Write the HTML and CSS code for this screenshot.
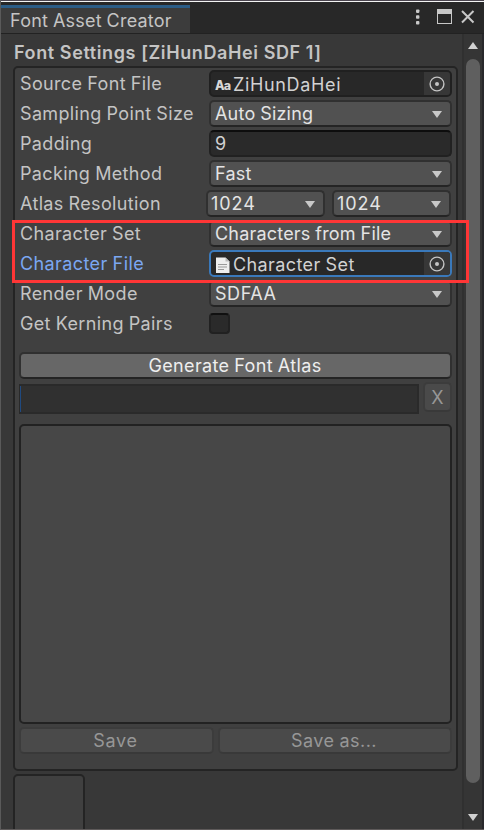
FILE: index.html
```html
<!DOCTYPE html>
<html lang="en">
<head>
<meta charset="utf-8">
<title>Font Asset Creator</title>
<link rel="stylesheet" href="styles.css">
</head>
<body>
<div class="window">
  <header class="titlebar">
    <div class="tab">Font Asset Creator</div>
    <svg class="controls" width="70" height="31" viewBox="0 0 70 31">
      <g fill="#c8c8c8"><rect x="4" y="6.5" width="3.4" height="3.4" rx=".8"/><rect x="4" y="12.3" width="3.4" height="3.4" rx=".8"/><rect x="4" y="18.1" width="3.4" height="3.4" rx=".8"/>
      <path d="M25 6h15v15H25zM26 11v9h13v-9z" fill-rule="evenodd"/></g>
      <path d="M50 8l11.500 11.500M61.500 8L50 19.500" stroke="#c8c8c8" stroke-width="2"/>
    </svg>
  </header>
  <div class="body">
    <main class="content">
      <h1>Font Settings [ZiHunDaHei SDF 1]</h1>
      <section class="panel">
        <div class="row"><label>Source Font File</label>
          <div class="field object"><svg class="aa" width="17" height="16" viewBox="0 0 17 16"><text x="0" y="13" textLength="16">Aa</text></svg><span class="font-name">ZiHunDaHei</span>
            <i class="picker"><svg width="16" height="16" viewBox="0 0 16 16"><circle cx="8" cy="8" r="6.9" fill="none" stroke="#c4c4c4" stroke-width="1.4"/><circle cx="8" cy="8" r="2" fill="#c4c4c4"/></svg></i></div></div>
        <div class="row"><label>Sampling Point Size</label><div class="field drop">Auto Sizing</div></div>
        <div class="row"><label>Padding</label><div class="field input">9</div></div>
        <div class="row"><label>Packing Method</label><div class="field drop">Fast</div></div>
        <div class="row pair"><label>Atlas Resolution</label><div class="field drop">1024</div><div class="field drop">1024</div></div>
        <div class="row"><label>Character Set</label><div class="field drop">Characters from File</div></div>
        <div class="row active"><label>Character File</label>
          <div class="field object"><svg class="doc" width="15" height="17" viewBox="0 0 15 17"><path d="M1 .5h9.500l4 4v11.500H1z" fill="#eee"/><path d="M10.500 .5v4h4" fill="#bbb"/><path d="M3 7.500h9M3 10h9M3 12.500h6" stroke="#999"/></svg><span>Character Set</span>
            <i class="picker"><svg width="16" height="16" viewBox="0 0 16 16"><circle cx="8" cy="8" r="6.9" fill="none" stroke="#c4c4c4" stroke-width="1.4"/><circle cx="8" cy="8" r="2" fill="#c4c4c4"/></svg></i></div></div>
        <div class="row"><label>Render Mode</label><div class="field drop mode">SDFAA</div></div>
        <div class="row"><label>Get Kerning Pairs</label><div class="check"></div></div>
        <button class="generate">Generate Font Atlas</button>
        <div class="progress-row"><div class="progress"></div><button class="muted cancel">X</button></div>
        <div class="preview"></div>
        <div class="save-row"><button class="muted save">Save</button><button class="muted saveas">Save as...</button></div>
      </section>
      <div class="thumb-box"></div>
    </main>
    <aside class="scrollbar"><i class="up"></i><div class="thumb"></div><i class="down"></i></aside>
  </div>
  <div class="highlight"></div>
</div>
</body>
</html>
```
FILE: styles.css
```css
* { box-sizing: border-box; }
body { margin: 0; background: #383838; }
.window {
  position: relative; width: 484px; height: 830px; overflow: hidden;
  display: flex; flex-direction: column;
  border-left: 1px solid #5a5a5a; border-bottom: 1px solid #5e5a5a;
  background: #383838; color: #c4c4c4;
  font: 18px/27px Inter, "Liberation Sans", sans-serif; letter-spacing: .35px; word-spacing: -.5px;
  white-space: nowrap;
}
.titlebar {
  height: 34px; flex: none; display: flex; align-items: flex-start; justify-content: space-between;
  background: #282828; border-top: 1px solid #4c4650; border-bottom: 1px solid #222;
  box-shadow: inset 0 1px #f4f4f4;
}
.tab {
  width: 189px; height: 28px; margin-top: 4px; padding-left: 9px;
  background: #3c3c3c; border-top: 3px solid #2c5d87; line-height: 26px; letter-spacing: .22px;
}
.controls { margin: 2px 2px 0 0; width: 70px; flex: none; }
.body { flex: 1; min-height: 0; display: flex; }
.content { width: 461px; padding: 5px 4px 0 12px; overflow: hidden; }
h1 { margin: 0 0 0 1px; height: 27px; font-size: 18px; line-height: 27px; font-weight: 600; letter-spacing: .6px; word-spacing: 0; }
.panel {
  width: 445px; height: 705px; padding: 2px 4px 0 4px;
  border: 2px solid #242424; border-radius: 5px; background: #404040;
}
.row { display: flex; height: 30px; }
.row label { width: 190px; padding-left: 1px; flex: none; line-height: 28px; }
.field {
  width: 243px; height: 27px; padding-left: 4px; position: relative; flex: none;
  border: 2px solid #303030; border-radius: 5px; line-height: 24px; color: #e4e4e4;
}
.drop { background: #515151; border-bottom-color: #242424; letter-spacing: .2px; }
.drop.mode { letter-spacing: .55px; }
.drop::after {
  content: ""; position: absolute; right: 8px; top: 9px;
  border: 5.5px solid transparent; border-top: 7px solid #c8c8c8; border-bottom: 0;
}
.object { display: flex; background: #282828; border-color: #202020; color: #d2d2d2; line-height: 25px; }
.font-name { letter-spacing: .65px; }
.input { background: #2a2a2a; border-color: #212121; border-top-color: #0d0d0d; color: #d2d2d2; }
.pair label { width: 187px; }
.pair .field { width: 119px; padding-left: 3px; letter-spacing: .95px; }
.pair .field + .field { margin-left: 7px; }
.aa { margin: 5px 1px 0 0; flex: none; overflow: visible; }
.aa text { font: 800 12.5px Inter, sans-serif; fill: #d8d8d8; letter-spacing: 0; }
.doc { margin: 5px 3px 0 0; flex: none; }
.picker {
  margin-left: auto; width: 26px; height: 23px; background: #373737; border-radius: 0 3px 3px 0;
  display: flex; align-items: center; justify-content: center;
}
.active label { color: #7ba7f2; letter-spacing: .4px; }
.active .object { border-color: #3a79bb; letter-spacing: .4px; }
.check {
  width: 21px; height: 21px; margin-top: 3px; background: #2a2a2a;
  border: 2px solid #212121; border-top-color: #101010; border-radius: 4px;
}
button {
  display: block; padding: 0; margin: 0; font: inherit; letter-spacing: inherit; word-spacing: inherit; text-align: center;
  border: 2px solid #303030; border-bottom-color: #242424; border-radius: 5px; color: #eee;
}
.generate { width: 433px; height: 27px; margin-top: 12px; padding-right: 1px; background: #676767; line-height: 24px; }
.progress-row { display: flex; height: 30px; margin-top: 5px; }
.progress { width: 400px; height: 30px; background: #303030; border: 2px solid #2a2a2a; border-left: 1px solid #292929; box-shadow: inset 1px 0 #204a80; }
.muted { background: #4a4a4a; border-color: #3c3c3c; border-bottom-color: #393939; color: #979797; line-height: 23px; }
.cancel { width: 29px; height: 30px; margin: -2px 0 0 4px; line-height: 28px; }
.preview { height: 300px; width: 433px; margin-top: 10px; border: 2px solid #222; border-radius: 5px; background: #474747; }
.save-row { display: flex; gap: 4px; margin-top: 3px; }
.save { width: 195px; height: 27px; padding-right: 2px; letter-spacing: .75px; }
.saveas { width: 234px; height: 27px; padding-right: 2px; letter-spacing: .45px; }
.thumb-box { width: 72px; height: 70px; margin-top: 3px; border: 2px solid #242424; border-radius: 5px; background: #404040; }
.scrollbar {
  width: 22px; display: flex; flex-direction: column; align-items: center;
  background: #353535; border-left: 2px solid #303030; border-right: 2px solid #28282b; padding-right: 1px;
}
.up { margin-top: 8px; border: 5.5px solid transparent; border-top: 0; border-bottom: 7px solid #d0d0d0; }
.thumb { width: 14px; height: 724px; margin-top: 10px; border-radius: 7px; background: #5f5f5f; flex: none; }
.down { margin-top: 31px; border: 5.5px solid transparent; border-bottom: 0; border-top: 7px solid #d0d0d0; }
.highlight { position: absolute; left: 11px; top: 220px; width: 457px; height: 63px; border: 3px solid #ff3636; }
```
